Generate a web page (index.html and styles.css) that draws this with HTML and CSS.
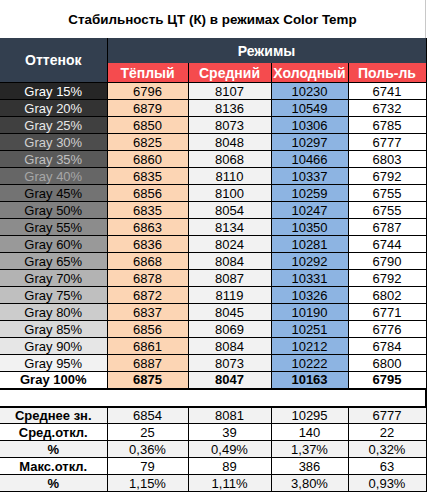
FILE: index.html
```html
<!DOCTYPE html>
<html lang="ru">
<head>
    <meta charset="UTF-8">
    <title>Стабильность ЦТ (К) в режимах Color Temp</title>
    <link rel="stylesheet" href="styles.css">
</head>
<body>
    <div class="chart">
        <h2 class="chart-title">Стабильность ЦТ (К) в режимах Color Temp</h2>
        <table class="ct-table">
            <colgroup>
                <col class="c-shade">
                <col class="c-warm">
                <col class="c-mid">
                <col class="c-cold">
                <col class="c-user">
            </colgroup>
            <thead>
                <tr class="head-top">
                    <th rowspan="2">Оттенок</th>
                    <th colspan="4">Режимы</th>
                </tr>
                <tr class="head-modes">
                    <th>Тёплый</th>
                    <th>Средний</th>
                    <th>Холодный</th>
                    <th>Поль-ль</th>
                </tr>
            </thead>
            <tbody>
                <tr><td class="shade g15">Gray 15%</td><td class="warm">6796</td><td class="mid">8107</td><td class="cold">10230</td><td>6741</td></tr>
                <tr><td class="shade g20">Gray 20%</td><td class="warm">6879</td><td class="mid">8136</td><td class="cold">10549</td><td>6732</td></tr>
                <tr><td class="shade g25">Gray 25%</td><td class="warm">6850</td><td class="mid">8073</td><td class="cold">10306</td><td>6785</td></tr>
                <tr><td class="shade g30">Gray 30%</td><td class="warm">6825</td><td class="mid">8048</td><td class="cold">10297</td><td>6777</td></tr>
                <tr><td class="shade g35">Gray 35%</td><td class="warm">6860</td><td class="mid">8068</td><td class="cold">10466</td><td>6803</td></tr>
                <tr><td class="shade g40">Gray 40%</td><td class="warm">6835</td><td class="mid">8110</td><td class="cold">10337</td><td>6792</td></tr>
                <tr><td class="shade g45">Gray 45%</td><td class="warm">6856</td><td class="mid">8100</td><td class="cold">10259</td><td>6755</td></tr>
                <tr><td class="shade g50">Gray 50%</td><td class="warm">6835</td><td class="mid">8054</td><td class="cold">10247</td><td>6755</td></tr>
                <tr><td class="shade g55">Gray 55%</td><td class="warm">6863</td><td class="mid">8134</td><td class="cold">10350</td><td>6787</td></tr>
                <tr><td class="shade g60">Gray 60%</td><td class="warm">6836</td><td class="mid">8024</td><td class="cold">10281</td><td>6744</td></tr>
                <tr><td class="shade g65">Gray 65%</td><td class="warm">6868</td><td class="mid">8084</td><td class="cold">10292</td><td>6790</td></tr>
                <tr><td class="shade g70">Gray 70%</td><td class="warm">6878</td><td class="mid">8087</td><td class="cold">10331</td><td>6792</td></tr>
                <tr><td class="shade g75">Gray 75%</td><td class="warm">6872</td><td class="mid">8119</td><td class="cold">10326</td><td>6802</td></tr>
                <tr><td class="shade g80">Gray 80%</td><td class="warm">6837</td><td class="mid">8045</td><td class="cold">10190</td><td>6771</td></tr>
                <tr><td class="shade g85">Gray 85%</td><td class="warm">6856</td><td class="mid">8069</td><td class="cold">10251</td><td>6776</td></tr>
                <tr><td class="shade g90">Gray 90%</td><td class="warm">6861</td><td class="mid">8084</td><td class="cold">10212</td><td>6784</td></tr>
                <tr><td class="shade g95">Gray 95%</td><td class="warm">6887</td><td class="mid">8073</td><td class="cold">10222</td><td>6800</td></tr>
                <tr class="bold"><td class="shade g100">Gray 100%</td><td class="warm">6875</td><td class="mid">8047</td><td class="cold">10163</td><td>6795</td></tr>
                <tr class="spacer"><td colspan="5"></td></tr>
                <tr class="stat alt"><th>Среднее зн.</th><td>6854</td><td>8081</td><td>10295</td><td>6777</td></tr>
                <tr class="stat"><th>Сред.откл.</th><td>25</td><td>39</td><td>140</td><td>22</td></tr>
                <tr class="stat alt"><th>%</th><td>0,36%</td><td>0,49%</td><td>1,37%</td><td>0,32%</td></tr>
                <tr class="stat"><th>Макс.откл.</th><td>79</td><td>89</td><td>386</td><td>63</td></tr>
                <tr class="stat alt"><th>%</th><td>1,15%</td><td>1,11%</td><td>3,80%</td><td>0,93%</td></tr>
            </tbody>
        </table>
    </div>
</body>
</html>
```

FILE: styles.css
```css
body {
    margin: 0;
    background-color: #fff;
    font-family: "Liberation Sans", Arial, sans-serif;
    font-size: 13px;
    color: #000;
}
.chart {
    width: 427px;
}
.chart-title {
    margin: 0;
    height: 38px;
    width: 425px;
    border-right: 1px solid #c8c8c8;
    display: flex;
    align-items: center;
    justify-content: center;
    font-size: 13.4px;
    font-weight: bold;
}
.ct-table {
    width: 426px;
    table-layout: fixed;
    border-collapse: collapse;
    text-align: center;
}
.ct-table .c-shade { width: 107px; }
.ct-table .c-warm { width: 81px; }
.ct-table .c-mid { width: 83px; }
.ct-table .c-cold { width: 77px; }
.ct-table .c-user { width: 78px; }

.ct-table th,
.ct-table td {
    padding: 0;
    border: 1px solid #000;
    white-space: nowrap;
}
.ct-table tr > :first-child {
    border-left: none;
}
.ct-table thead th {
    color: #fff;
    font-size: 14px;
}
.ct-table .head-top th {
    background-color: #333f4f;
    height: 25px;
    border-top: none;
    border-bottom: none;
}
.ct-table .head-modes th {
    background-color: #f54b4e;
    height: 19px;
    border-top: none;
}
.ct-table tbody tr {
    height: 17px;
}
.ct-table .warm { background-color: #fcd5b4; }
.ct-table .mid { background-color: #f2f2f2; }
.ct-table .cold { background-color: #8db4e2; }
.ct-table .bold td { font-weight: bold; }

.ct-table .g15 { background-color: #262626; color: #fff; }
.ct-table .g20 { background-color: #333; color: #f2f2f2; }
.ct-table .g25 { background-color: #404040; color: #e6e6e6; }
.ct-table .g30 { background-color: #4d4d4d; color: #d0d0d0; }
.ct-table .g35 { background-color: #595959; color: #c0c0c0; }
.ct-table .g40 { background-color: #666; color: #a6a6a6; }
.ct-table .g45 { background-color: #737373; }
.ct-table .g50 { background-color: #808080; }
.ct-table .g55 { background-color: #8c8c8c; }
.ct-table .g60 { background-color: #999; }
.ct-table .g65 { background-color: #a6a6a6; }
.ct-table .g70 { background-color: #b3b3b3; }
.ct-table .g75 { background-color: #bfbfbf; }
.ct-table .g80 { background-color: #ccc; }
.ct-table .g85 { background-color: #d9d9d9; }
.ct-table .g90 { background-color: #e6e6e6; }
.ct-table .g95 { background-color: #f2f2f2; }
.ct-table .g100 { background-color: #fff; }

.ct-table .spacer {
    height: 18px;
}
.ct-table .spacer td {
    border-top: 2px solid #000;
    border-bottom: 2px solid #000;
    border-right: 2px solid #000;
}
.ct-table .stat th {
    font-weight: bold;
}
.ct-table .stat.alt th,
.ct-table .stat.alt td {
    background-color: #f2f2f2;
}
```
